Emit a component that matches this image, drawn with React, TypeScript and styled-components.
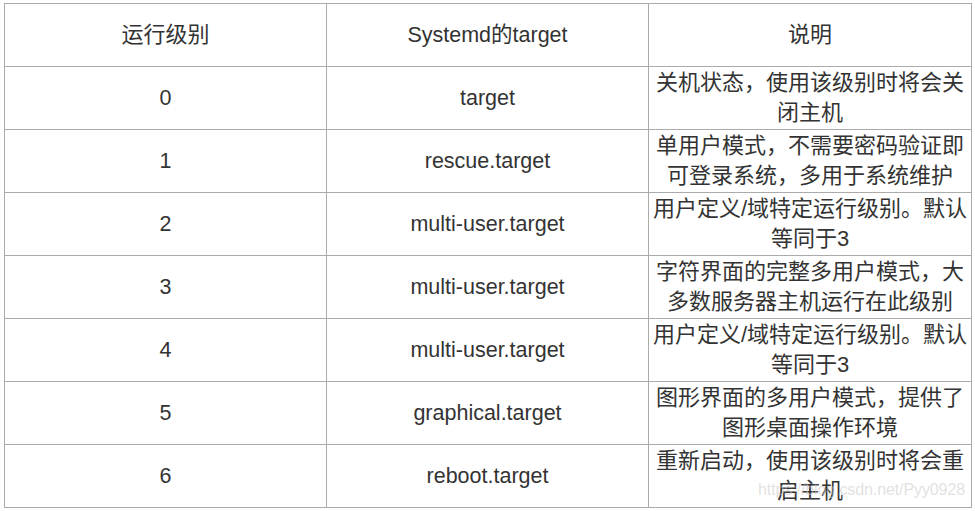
import React from 'react';
import styled, { createGlobalStyle } from 'styled-components';

const GlobalStyle = createGlobalStyle`
  html, body {
    margin: 0;
    padding: 0;
    background: #ffffff;
  }
`;

const Page = styled.div`
  position: relative;
  width: 975px;
  height: 511px;
  padding: 3px 0 0 4px;
  box-sizing: border-box;
  font-family: "Liberation Sans", Arial, "Noto Sans CJK SC", sans-serif;
  color: #333333;
`;

const Table = styled.table`
  border-collapse: collapse;
  table-layout: fixed;
  width: 967px;
`;

const Row = styled.tr`
  height: 63px;
`;

const Cell = styled.td<{ $cjk?: boolean }>`
  border: 1px solid #ababab;
  padding: 0 2px;
  text-align: center;
  vertical-align: middle;
  font-size: ${(p) => (p.$cjk ? '22px' : '21.5px')};
  line-height: 30px;
  font-weight: normal;
  overflow: hidden;
`;

const Watermark = styled.div`
  position: absolute;
  left: 758px;
  top: 481px;
  font-family: "Liberation Sans", Arial, sans-serif;
  font-size: 16px;
  letter-spacing: -0.1px;
  color: rgba(200, 200, 200, 0.55);
  pointer-events: none;
  white-space: nowrap;
`;

const rows: [string, string, string][] = [
  ['0', 'target', '关机状态，使用该级别时将会关闭主机'],
  ['1', 'rescue.target', '单用户模式，不需要密码验证即可登录系统，多用于系统维护'],
  ['2', 'multi-user.target', '用户定义/域特定运行级别。默认等同于3'],
  ['3', 'multi-user.target', '字符界面的完整多用户模式，大多数服务器主机运行在此级别'],
  ['4', 'multi-user.target', '用户定义/域特定运行级别。默认等同于3'],
  ['5', 'graphical.target', '图形界面的多用户模式，提供了图形桌面操作环境'],
  ['6', 'reboot.target', '重新启动，使用该级别时将会重启主机'],
];

const App: React.FC = () => {
  return (
    <>
      <GlobalStyle />
      <Page>
        <Table>
          <colgroup>
            <col style={{ width: 322 }} />
            <col style={{ width: 322 }} />
            <col style={{ width: 323 }} />
          </colgroup>
          <tbody>
            <Row>
              <Cell $cjk>运行级别</Cell>
              <Cell>Systemd的target</Cell>
              <Cell $cjk>说明</Cell>
            </Row>
            {rows.map(([level, target, desc]) => (
              <Row key={level}>
                <Cell>{level}</Cell>
                <Cell>{target}</Cell>
                <Cell $cjk>{desc}</Cell>
              </Row>
            ))}
          </tbody>
        </Table>
        <Watermark>https://blog.csdn.net/Pyy0928</Watermark>
      </Page>
    </>
  );
};

export default App;
